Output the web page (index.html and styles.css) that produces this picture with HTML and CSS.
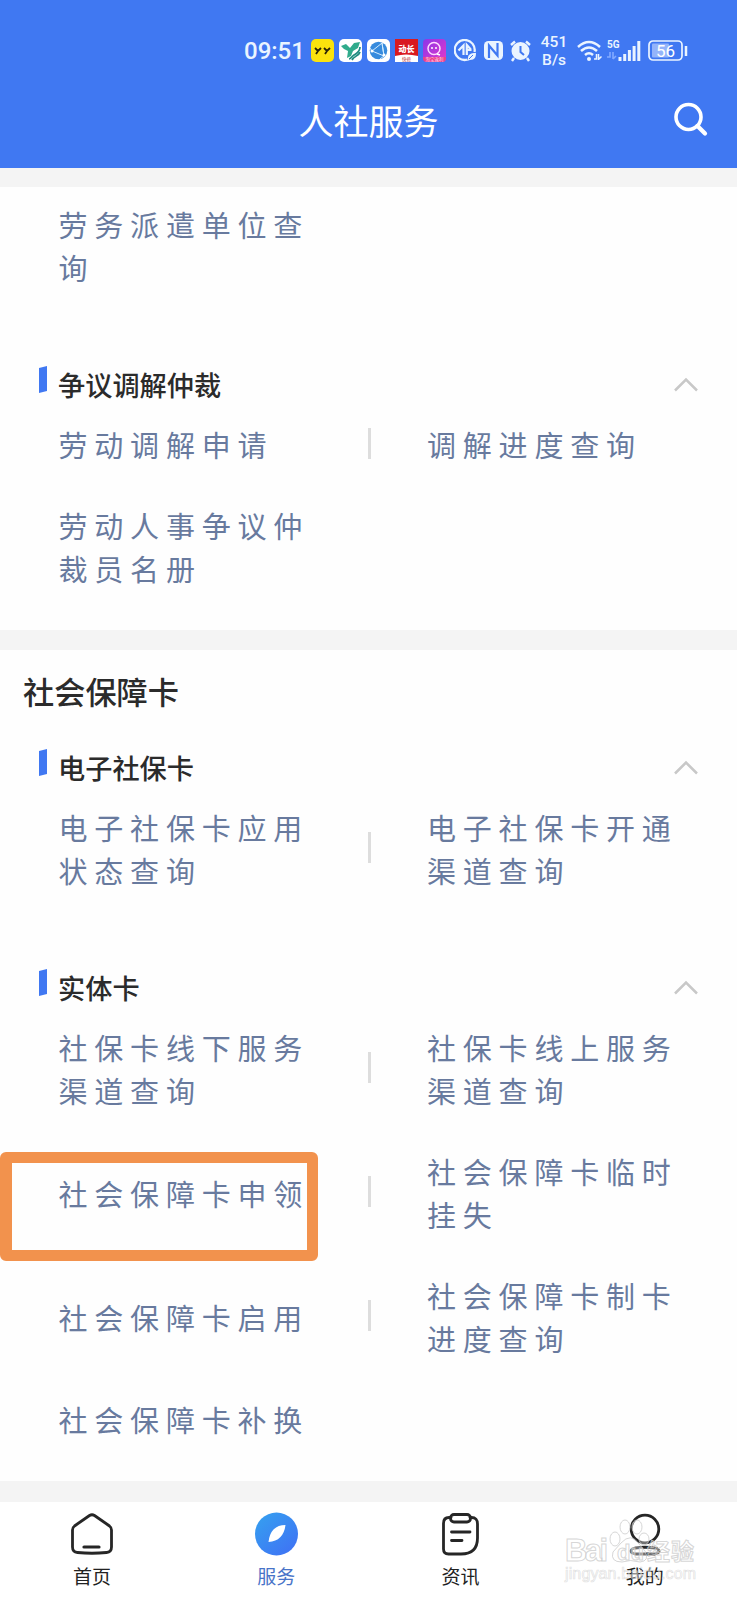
FILE: index.html
```html
<!DOCTYPE html>
<html lang="zh-CN">
<head>
    <meta charset="UTF-8">
    <title>人社服务</title>
    <link rel="stylesheet" href="styles.css">
</head>
<body>
    <header class="header">
        <div class="status-bar">
            <span class="time">09:51</span>
            <div class="apps">
                <svg width="23" height="23" viewBox="0 0 23 23"><rect width="23" height="23" rx="5" fill="#fbe30d"/><path d="M4 9l3 3 3-3M7 12l-2 3M13 9l3 3 3-3M16 12l-2 3" fill="none" stroke="#2b2508" stroke-width="1.8"/></svg>
                <svg width="23" height="23" viewBox="0 0 23 23"><rect width="23" height="23" rx="5" fill="#fff"/><path d="M2 7l5-2 4 4 4-5 6-1-2 6-5 3-2 5-4 2 1-7-4-2z" fill="#30ab8c"/><path d="M21 8c0 5-3 6-6 8s-3 4-5 4M21 13c-1 4-6 4-8 8" fill="none" stroke="#208b80" stroke-width="1.7"/></svg>
                <svg width="23" height="23" viewBox="0 0 23 23"><rect width="23" height="23" rx="5" fill="#fff"/><circle cx="11.5" cy="11.5" r="8.8" fill="#378bdd"/><path d="M15 4L5 12l12 5zM15 4l2 13M5 12l-2-3M17 17l-4 3" fill="none" stroke="#d3ecff" stroke-width="1"/><circle cx="5" cy="12" r="1.5" fill="#fff"/><circle cx="17" cy="16" r="1.5" fill="#fff"/></svg>
                <svg width="23" height="23" viewBox="0 0 23 23"><rect width="23" height="23" fill="#d91920"/><path d="M0 17q11-3 23 0v6H0z" fill="#fff"/><text x="11.5" y="12.5" class="app-name">动长</text><text x="11.5" y="21.5" class="app-note">快修</text></svg>
                <svg width="23" height="23" viewBox="0 0 23 23"><defs><linearGradient id="pink" x2="1" y2="1"><stop stop-color="#8c36e9"/><stop offset="1" stop-color="#e438c9"/></linearGradient></defs><rect width="23" height="23" rx="4" fill="url(#pink)"/><path d="M0 18h23v1q0 4-4 4H4q-4 0-4-4z" fill="#ed4188"/><circle cx="11" cy="9.5" r="6" fill="none" stroke="#ffd9ff" stroke-width="1.5"/><path d="M9 8v2M13 8v2M14 15l3 1" stroke="#fff" stroke-width="1.5"/><text x="11.5" y="22" class="app-note light">淘宝返利</text></svg>
            </div>
            <div class="system">
                <svg width="23" height="23" viewBox="0 0 23 23"><path d="M20.5 13A10 10 0 1 0 13 20.7" fill="none" stroke="#eaf4ff" stroke-width="2.3"/><path d="M4.5 11.5L9.5 6.500v9.500M17.500 11H12.800V6l4 4.500M12.800 10v6" fill="none" stroke="#eaf4ff" stroke-width="2.200"/><path d="M22 14c-6 0-8 2-8 5l-1 3 3-1c5 0 6-3 6-7z" fill="#eaf4ff"/><path d="M15 20l4-4" stroke="#4078f2"/></svg>
                <svg width="19" height="19" viewBox="0 0 19 19"><rect width="19" height="19" rx="4.500" fill="#eaf4ff"/><path d="M5 17V4.500l8.500 10V2" fill="none" stroke="#4078f2" stroke-width="2.200"/></svg>
                <svg width="21" height="22" viewBox="0 0 21 22"><circle cx="10.500" cy="11" r="9" fill="#eaf4ff"/><path d="M1 5l4-3.500M16 1.500L20 5M4 18l-2 3M17 18l2 3" stroke="#eaf4ff" stroke-width="2.400"/><path d="M10.500 6v6l3.500 3" fill="none" stroke="#4078f2" stroke-width="2"/></svg>
            </div>
            <div class="speed">451<br>B/s</div>
            <svg class="wifi" width="25" height="22" viewBox="0 0 25 22"><g fill="none" stroke="#eaf4ff" stroke-width="2.500"><path d="M1 7Q12 -3 23 7M4 11Q12 4 20 11M8 15Q12 11.500 16 15"/></g><circle cx="12" cy="19" r="2" fill="#eaf4ff"/><path d="M17 19h2.500v-5M21.500 14v6M21.500 19.500l3-3" fill="none" stroke="#eaf4ff" stroke-width="1.500"/></svg>
            <svg class="signal" width="34" height="23" viewBox="0 0 34 23"><text x="0" y="9" class="net">5G</text><path d="M0 18h3v-5M6 13v7M6 20l3-3" fill="none" stroke="#83aaff" stroke-width="1.600"/><path d="M13 22v-4M17.700 22v-7M22.400 22V11M27.100 22V7M31.800 22V2" stroke="#eaf4ff" stroke-width="3"/></svg>
            <svg class="battery" width="40" height="21" viewBox="0 0 40 21"><rect x="4" y="3.500" width="17" height="14" rx="1" fill="#94b4fa"/><rect x="1" y="1" width="33" height="19" rx="4" fill="none" stroke="#eaf4ff" stroke-width="1.700"/><path d="M38 6v10" stroke="#eaf4ff" stroke-width="2.500"/><text x="17.500" y="16.500" class="charge">56</text></svg>
        </div>
        <div class="title-bar">
            <h1>人社服务</h1>
            <svg class="search" width="36" height="36" viewBox="0 0 36 36"><circle cx="15.500" cy="15" r="12.500" fill="none" stroke="#fff" stroke-width="3.600"/><path d="M24.500 24l7.500 7.500" stroke="#fff" stroke-width="4.200" stroke-linecap="round"/></svg>
        </div>
    </header>

    <main>
        <section class="card">
            <div class="group">
                <div class="row cut">
                    <a class="item">劳务派遣单位查询</a>
                </div>
            </div>
            <div class="group">
                <h3>争议调解仲裁<svg class="arrow" width="26" height="16" viewBox="0 0 26 16"><path d="M2 13.500L13 2.500l11 11"/></svg></h3>
                <div class="row">
                    <a class="item">劳动调解申请</a>
                    <a class="item">调解进度查询</a>
                </div>
                <div class="row">
                    <a class="item">劳动人事争议仲裁员名册</a>
                </div>
            </div>
        </section>

        <section class="card">
            <h2>社会保障卡</h2>
            <div class="group">
                <h3>电子社保卡<svg class="arrow" width="26" height="16" viewBox="0 0 26 16"><path d="M2 13.500L13 2.500l11 11"/></svg></h3>
                <div class="row">
                    <a class="item">电子社保卡应用状态查询</a>
                    <a class="item">电子社保卡开通渠道查询</a>
                </div>
            </div>
            <div class="group">
                <h3>实体卡<svg class="arrow" width="26" height="16" viewBox="0 0 26 16"><path d="M2 13.500L13 2.500l11 11"/></svg></h3>
                <div class="row">
                    <a class="item">社保卡线下服务渠道查询</a>
                    <a class="item">社保卡线上服务渠道查询</a>
                </div>
                <div class="row">
                    <a class="item marked">社会保障卡申领</a>
                    <a class="item">社会保障卡临时挂失</a>
                </div>
                <div class="row">
                    <a class="item">社会保障卡启用</a>
                    <a class="item">社会保障卡制卡进度查询</a>
                </div>
                <div class="row">
                    <a class="item">社会保障卡补换</a>
                </div>
            </div>
        </section>
    </main>

    <nav class="tabs">
        <a class="tab">
            <svg width="44" height="44" viewBox="0 0 44 44"><path d="M19.500 3.500q2.500-1.500 5 0L39.500 14q2 1.500 2 4v17q0 5-5 5.500-14.500 1.500-29 0-5-.5-5-5.500V18q0-2.500 2-4z"/><path d="M14 35h15" stroke-width="3.200"/></svg>
            首页
        </a>
        <a class="tab active">
            <svg width="44" height="44" viewBox="0 0 44 44"><defs><linearGradient id="blue" x1=".1" y1=".1" x2=".8" y2=".9"><stop stop-color="#369df0"/><stop offset="1" stop-color="#3e76f4"/></linearGradient></defs><circle cx="22.500" cy="22" r="21.500" fill="url(#blue)" stroke="none"/><path d="M31.500 13q-15 0-17 17 15-1 17-17z" fill="#fff" stroke="none"/></svg>
            服务
        </a>
        <a class="tab">
            <svg width="44" height="44" viewBox="0 0 44 44"><path d="M12 5.500H10q-5.500 0-5.500 6V37q0 5 5 5H22Q38.500 42 38.500 26V12q0-6.500-6-6.500H31"/><rect x="11.500" y="2.500" width="20" height="7.500" rx="3.500"/><path d="M12.500 20H31M12.500 28.500H23"/></svg>
            资讯
        </a>
        <a class="tab">
            <svg width="44" height="44" viewBox="0 0 44 44"><circle cx="22" cy="17" r="13.800"/><path d="M12 36q10-1.500 20 0 4 1 4 3t-4 3H12q-4-1-4-3t4-3z"/></svg>
            我的
        </a>
        <svg class="watermark" width="140" height="85" viewBox="0 0 140 85">
            <g class="mark">
                <text x="5" y="51" font-size="31" textLength="43">Bai</text>
                <ellipse cx="55" cy="29" rx="5" ry="7"/>
                <ellipse cx="65" cy="17" rx="5" ry="7"/>
                <ellipse cx="77" cy="17" rx="5" ry="7"/>
                <ellipse cx="84" cy="29" rx="5" ry="6"/>
                <path d="M61 33q10-11 18 1l6 7q5 10-5 11-10-3-18 0-12 0-9-10z"/>
                <text x="57" y="50" font-size="22" textLength="27">du</text>
                <text x="87" y="50" font-size="23" textLength="47">经验</text>
            </g>
            <text class="site" x="5" y="69" textLength="131">jingyan.baidu.com</text>
        </svg>
    </nav>
</body>
</html>
```
FILE: styles.css
```css
* { box-sizing: border-box; }
body { margin: 0; width: 737px; background: #f4f4f4; color: #2b2b2b; font-family: "Noto Sans CJK SC", sans-serif; }
h1, h2, h3 { margin: 0; font-weight: 500; }

.header { height: 168px; background: #4078f2; color: #fff; }
.status-bar { display: flex; align-items: center; height: 101px; padding-left: 244px; color: #eaf4ff; }
.status-bar svg { display: block; flex: none; }
.time { width: 67px; font: 500 24px Roboto, sans-serif; }
.apps { display: flex; gap: 5px; }
.system { display: flex; align-items: center; gap: 7px; margin-left: 8px; }
.speed { width: 38px; margin-left: 4px; text-align: center; font: 500 15.500px/18px Roboto, sans-serif; }
.wifi { margin-left: 4px; }
.signal { margin-left: 5px; }
.battery { margin-left: 7px; }
.app-name { font-size: 8px; font-weight: 900; fill: #fff; text-anchor: middle; }
.app-note { font-size: 4.500px; fill: #b52026; text-anchor: middle; }
.light { fill: #ffd5ee; }
.net { font: bold 10px Roboto, sans-serif; fill: #eaf4ff; }
.charge { font: 17px Roboto, sans-serif; fill: #fff; text-anchor: middle; }

.title-bar { display: grid; grid-template-columns: 1fr auto 1fr; align-items: center; height: 38px; }
.title-bar h1 { grid-column: 2; font-size: 35px; line-height: 38px; font-weight: 400; }
.search { justify-self: end; margin-right: 28px; }

main { display: flex; flex-direction: column; gap: 20px; padding: 19px 0 21px; }
.card { background: #fefefe; padding-bottom: 21px; }
.card h2 { padding-left: 23px; height: 98px; font-size: 31.200px; line-height: 82px; }
.group + .group { margin-top: 57px; }
.group h3 { display: flex; align-items: center; height: 39px; padding: 0 38px 0 39px; font-size: 27.200px; line-height: 39px; }
.group h3::before { content: ""; width: 8px; height: 25px; margin: -11px 11px 0 0; background: #4078f2; transform: skewY(-15deg); }
.arrow { margin-left: auto; fill: none; stroke: #c8c8c8; stroke-width: 2.500; }

.row { display: grid; grid-template-columns: 1fr 1fr; align-items: center; padding: 19px 0; }
.cut { padding-top: 16px; }
.item { position: relative; padding: 0 40px 0 58.500px; color: #687a9e; font-size: 29px; line-height: 43px; letter-spacing: 6.800px; }
.item + .item::before { content: ""; position: absolute; left: -1px; top: 50%; width: 3px; height: 31px; margin-top: -17px; background: #ddd; }
.marked::after { content: ""; box-sizing: border-box; position: absolute; left: 0; top: -20px; width: 318px; height: 109px; border: 11px solid #f2924d; border-left-width: 12px; border-radius: 6px; }

.tabs { position: relative; display: grid; grid-template-columns: repeat(4, 1fr); height: 98px; background: #fff; }
.tab { display: flex; flex-direction: column; align-items: center; padding-top: 10px; font-size: 19px; line-height: 40px; color: #222; }
.tab svg { fill: none; stroke: #262626; stroke-width: 2.800; stroke-linecap: round; flex: none; }
.active { color: #4873c8; }
.watermark { position: absolute; left: 560px; top: 8px; }
.mark { fill: #fff; fill-opacity: .35; stroke: #ccc; stroke-width: 1; stroke-opacity: .8; font-family: "Liberation Sans", "Noto Sans CJK SC", sans-serif; font-weight: bold; }
.site { fill: #fff; fill-opacity: .4; stroke: #ccc; stroke-opacity: .6; stroke-width: .7; font: 16px "Liberation Sans", sans-serif; }
```
